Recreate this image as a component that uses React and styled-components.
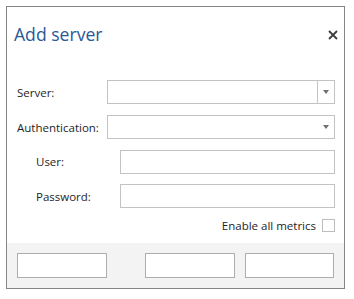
import React from "react";
import styled, { createGlobalStyle } from "styled-components";

const GlobalStyle = createGlobalStyle`
  html, body {
    margin: 0;
    padding: 0;
    background: #ffffff;
  }
  body {
    font-family: "Open Sans", "Noto Sans", sans-serif;
    font-size: 11.5px;
    color: #1e1e1e;
  }
  * {
    box-sizing: border-box;
  }
`;

const Dialog = styled.div`
  margin: 6px;
  width: 339px;
  height: 283px;
  border: 1px solid #858585;
  background: #fff;
  display: flex;
  flex-direction: column;
`;

const Header = styled.div`
  display: flex;
  align-items: center;
  justify-content: space-between;
  padding: 9px 5px 0 7px;
  height: 45px;
`;

const Title = styled.h1`
  margin: 0;
  font-family: "Open Sans", sans-serif;
  font-weight: 400;
  font-size: 17.6px;
  line-height: 24px;
  color: #2b5797;
`;

const CloseButton = styled.button`
  width: 12px;
  height: 12px;
  padding: 0;
  border: none;
  background: none;
  display: flex;
  align-items: center;
  justify-content: center;
  margin-top: 1px;
`;

const Form = styled.div`
  margin-top: 28px;
  padding: 0 9px 0 10px;
  display: flex;
  flex-direction: column;
  gap: 11px;
`;

const Row = styled.div`
  display: grid;
  grid-template-columns: ${(p) => (p.$nested ? "84px 1fr" : "90px 1fr")};
  padding-left: ${(p) => (p.$nested ? "19px" : "0")};
  align-items: center;
  height: 24px;
  margin-top: ${(p) => (p.$nested ? "-0.5px" : "0")};
`;

const Label = styled.label`
  font-size: 11.5px;
  white-space: nowrap;
`;

const TextBox = styled.div`
  height: 24px;
  border: 1px solid #c3c3c3;
  background: #fff;
`;

const Combo = styled.div`
  height: 24px;
  border: 1px solid #c3c3c3;
  background: #fff;
  display: flex;
  justify-content: flex-end;
`;

const ComboArrow = styled.div`
  width: 17px;
  border-left: 1px solid ${(p) => (p.$split ? "#c3c3c3" : "transparent")};
  display: flex;
  align-items: center;
  justify-content: center;
`;

const Arrow = styled.div`
  width: 0;
  height: 0;
  border-left: 3.5px solid transparent;
  border-right: 3.5px solid transparent;
  border-top: 4px solid #707070;
`;

const CheckRow = styled.div`
  display: flex;
  justify-content: flex-end;
  align-items: center;
  gap: 6px;
  margin-top: -1px;
  height: 14px;
`;

const Check = styled.div`
  width: 13px;
  height: 13px;
  border: 1px solid #bdbdbd;
  background: #fff;
`;

const Footer = styled.div`
  margin-top: auto;
  height: 45px;
  background: #f3f3f3;
  padding: 10px 10px 0 10px;
  display: flex;
  justify-content: space-between;
  align-items: flex-start;
`;

const ButtonGroup = styled.div`
  display: flex;
  gap: 10px;
`;

const Button = styled.button`
  width: ${(p) => p.$w || 90}px;
  height: 25px;
  border: 1px solid #adadad;
  background: #fff;
  padding: 0;
`;

function DropArrow({ split }) {
  return (
    <ComboArrow $split={split}>
      <Arrow />
    </ComboArrow>
  );
}

export default function App() {
  return (
    <>
      <GlobalStyle />
      <Dialog>
        <Header>
          <Title>Add server</Title>
          <CloseButton aria-label="Close">
            <svg width="10" height="10" viewBox="0 0 10 10">
              <path d="M1 1L9 9M9 1L1 9" stroke="#3c3c3c" strokeWidth="1.8" />
            </svg>
          </CloseButton>
        </Header>
        <Form>
          <Row>
            <Label>Server:</Label>
            <Combo>
              <DropArrow split />
            </Combo>
          </Row>
          <Row>
            <Label>Authentication:</Label>
            <Combo>
              <DropArrow />
            </Combo>
          </Row>
          <Row $nested>
            <Label>User:</Label>
            <TextBox />
          </Row>
          <Row $nested>
            <Label>Password:</Label>
            <TextBox />
          </Row>
          <CheckRow>
            <Label>Enable all metrics</Label>
            <Check />
          </CheckRow>
        </Form>
        <Footer>
          <Button />
          <ButtonGroup>
            <Button />
            <Button $w={89} />
          </ButtonGroup>
        </Footer>
      </Dialog>
    </>
  );
}
